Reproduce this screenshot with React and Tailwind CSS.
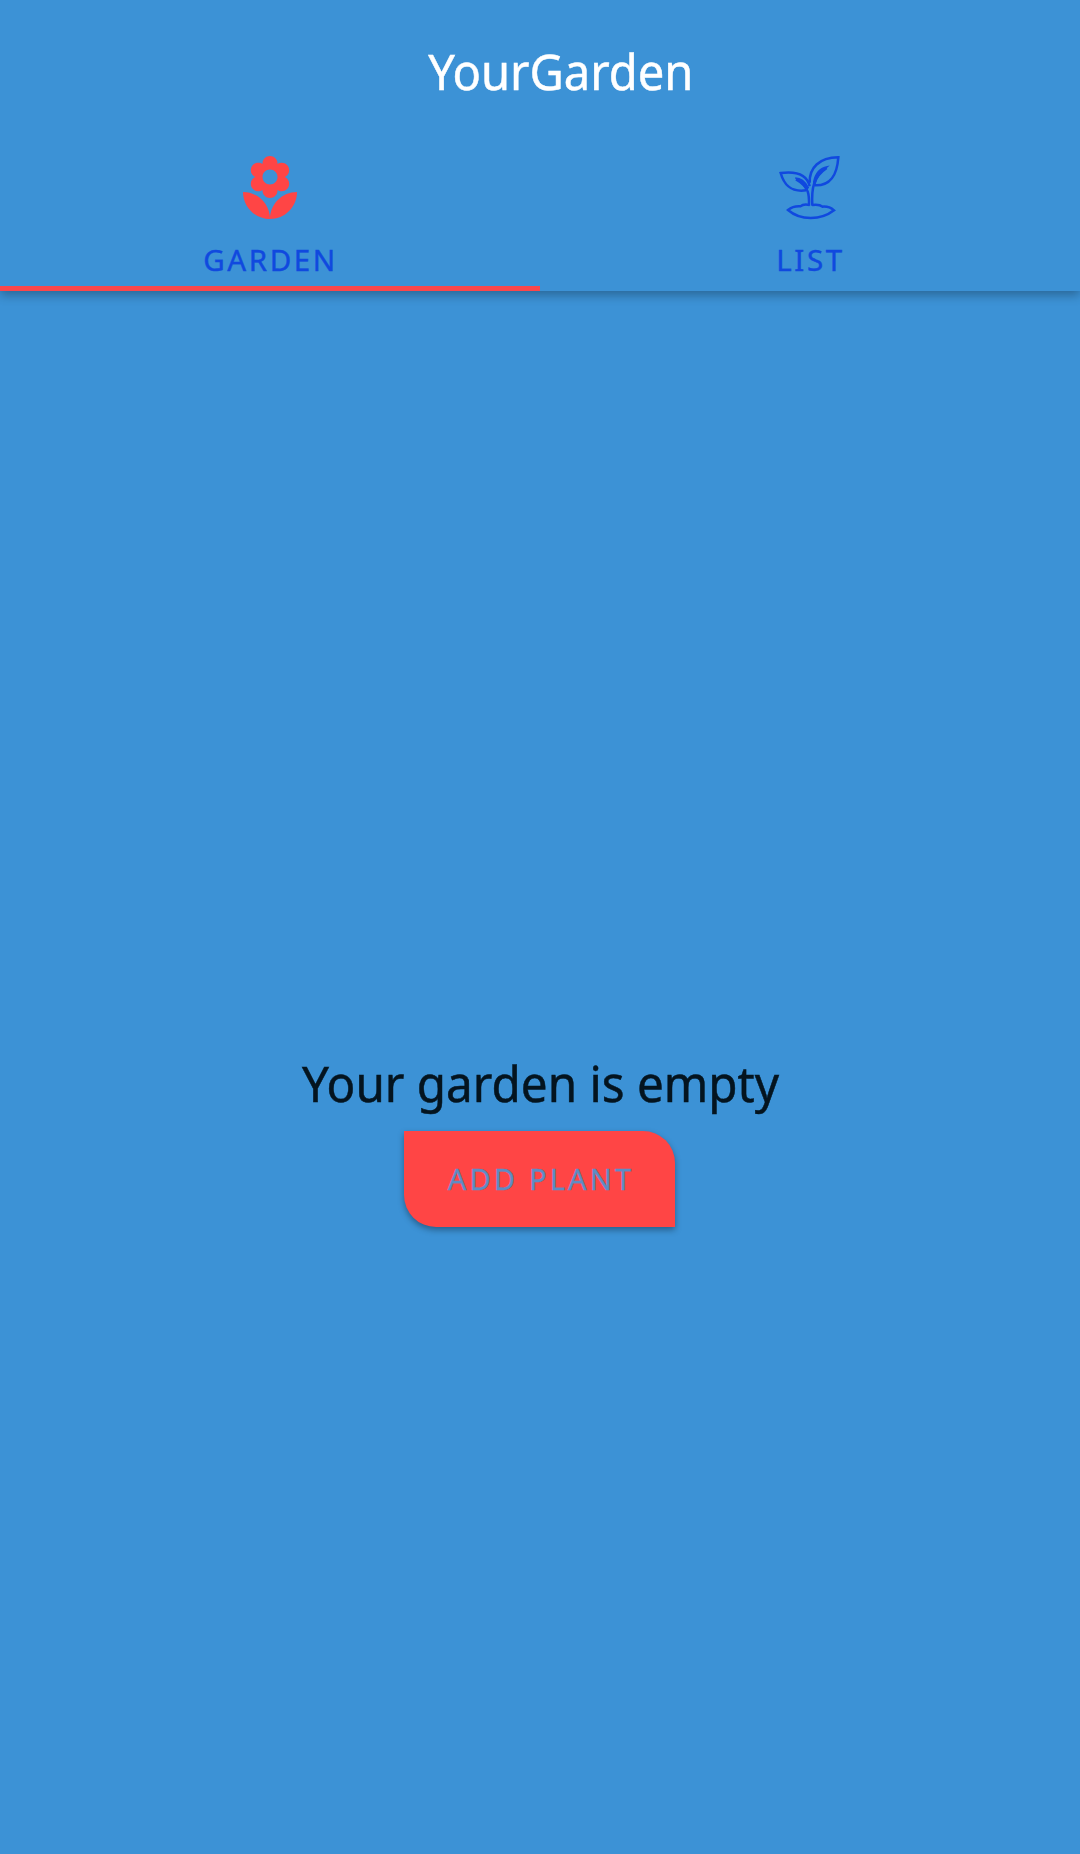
import React from "react";

function FlowerIcon() {
  return (
    <svg viewBox="0 0 24 24" className="size-[72px]" fill="#ff4545">
      <path d="M12 22c4.97 0 9-4.03 9-9-4.97 0-9 4.03-9 9zM5.6 10.25c0 1.38 1.12 2.5 2.5 2.5.53 0 1.01-.16 1.42-.44l-.02.19c0 1.38 1.12 2.5 2.5 2.5s2.5-1.12 2.5-2.5l-.02-.19c.4.28.89.44 1.42.44 1.38 0 2.5-1.12 2.5-2.5 0-1-.59-1.85-1.43-2.25.84-.4 1.43-1.25 1.43-2.25 0-1.38-1.12-2.5-2.5-2.5-.53 0-1.01.16-1.42.44l.02-.19C14.5 2.12 13.38 1 12 1S9.5 2.12 9.5 3.5l.02.19c-.4-.28-.89-.44-1.42-.44-1.38 0-2.5 1.12-2.5 2.5 0 1 .59 1.85 1.43 2.25-.84.4-1.43 1.25-1.43 2.25zM12 5.5c1.38 0 2.5 1.12 2.5 2.5s-1.12 2.5-2.5 2.5S9.5 9.38 9.5 8s1.12-2.5 2.5-2.5zM3 13c0 4.97 4.03 9 9 9 0-4.97-4.03-9-9-9z" />
    </svg>
  );
}

function SproutIcon() {
  return (
    <svg viewBox="42 24 216 216" className="size-[72px]" fill="none" stroke="#1049df" strokeWidth="7.5">
      <path d="M149 113C148 68 177 38 235 37C231 91 212 123 164 121" />
      <path d="M149 124C142 92 117 77 62 84C73 123 95 142 138 136" />
      <path d="M147 182C148 151 148 125 108 103" />
      <path d="M157 182C154 129 160 96 200 69" />
      <path d="M106 99C120 99 135 109 145 128L139 134C130 117 121 107 106 99Z" fill="#1049df" strokeWidth="4" />
      <path d="M202 65C180 69 166 84 161 111L165 117C173 90 185 79 202 65Z" fill="#1049df" strokeWidth="4" />
      <path d="M149 180C136 177 128 178 121 184C106 183 94 187 84 195C121 227 182 227 222 196C213 188 203 184 188 185C179 178 169 178 156 180" />
    </svg>
  );
}

function Tab({ icon, label, active }) {
  return (
    <button className="flex flex-1 flex-col items-center pt-[17px]">
      {icon}
      <span className="mt-[15px] h-[40px] pl-[1px] text-[29.5px] leading-[40px] tracking-[2.6px] text-[#1049df] [-webkit-text-stroke:0.4px_#1049df]">
        {label}
      </span>
      <span className={active ? "mt-auto h-[5px] w-full bg-[#fb474b]" : "mt-auto h-[5px] w-full"} />
    </button>
  );
}

export default function App() {
  return (
    <div className="flex h-[1854px] w-[1080px] flex-col bg-[#3c92d6] font-['Noto_Sans',sans-serif]">
      <header className="flex h-[291px] flex-col bg-[#3c92d6] shadow-[0_4px_10px_rgba(0,0,0,0.3)]">
        <h1 className="h-[136px] pt-[37px] pl-[41px] text-center text-[50px] leading-[68px] text-white [-webkit-text-stroke:0.5px_white]">
          <span className="inline-block scale-x-[0.942]">YourGarden</span>
        </h1>
        <nav className="flex flex-1">
          <Tab icon={<FlowerIcon />} label="GARDEN" active />
          <Tab icon={<SproutIcon />} label="LIST" />
        </nav>
      </header>
      <main className="flex flex-1 flex-col items-center pt-[758px]">
        <p className="h-[82px] scale-x-[0.952] text-[50px] leading-[68px] whitespace-nowrap text-[#04141f] [-webkit-text-stroke:0.5px_#04141f]">
          Your garden is empty
        </p>
        <button className="mr-[1px] h-[96px] w-[271px] rounded-tr-[32px] rounded-bl-[32px] bg-[#ff4545] pl-[3px] text-[29px] leading-[40px] tracking-[3.2px] text-[#5e8cc4] shadow-[0_3px_6px_rgba(0,0,0,0.35)] [-webkit-text-stroke:0.4px_#5e8cc4]">
          ADD PLANT
        </button>
      </main>
    </div>
  );
}
